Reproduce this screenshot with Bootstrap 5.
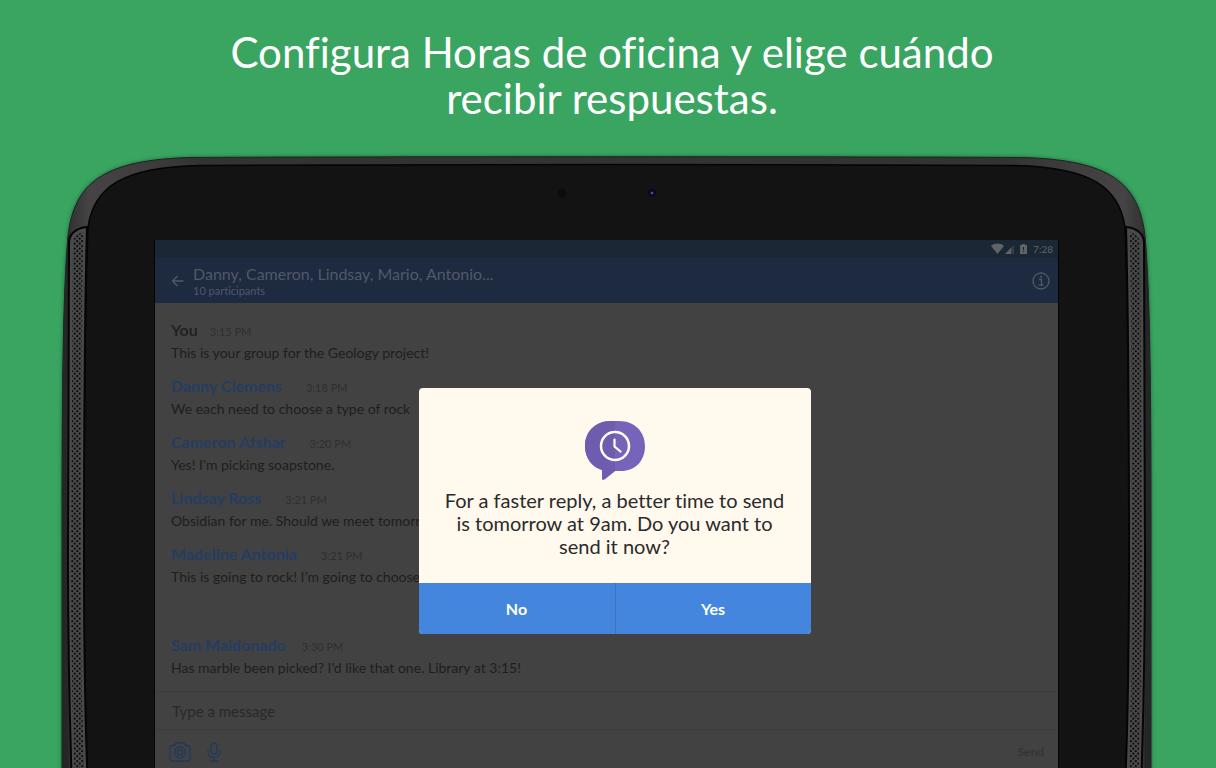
<!DOCTYPE html>
<html lang="es">
<head>
<meta charset="utf-8">
<meta name="viewport" content="width=device-width, initial-scale=1">
<title>Horas de oficina</title>
<link href="https://cdn.jsdelivr.net/npm/bootstrap@5.3.0/dist/css/bootstrap.min.css" rel="stylesheet">
<style>
  body { background: #39a561; font-family: Lato, "Open Sans", sans-serif; font-variant-ligatures: none; }
  .headline { color: #fff; font-size: 42px; line-height: 46px; font-weight: 400; padding: 29px 200px 35px 208px; }
  .tablet { margin: 0 65px 0 62px; padding: 84px 93px 0; }
  .shell { z-index: 0; }
  .screen { z-index: 1; background: #424242; color: #1e1e1e; }
  .status { background: #1a2735; color: #5f6468; height: 18px; font-size: 10px; padding-right: 5px; }
  .appbar { background: #1d2a40; color: #51586a; height: 45px; padding: 0 8px 0 16px; }
  .appbar h2 { font-size: 16px; line-height: 20px; font-weight: 400; }
  .appbar p { font-size: 11px; line-height: 14px; }
  .appbar .btn, .tools .btn { line-height: 0; color: inherit; }
  .thread { padding: 16px 16px 13px; font-size: 14px; line-height: 21px; }
  .msg { height: 56px; }
  .msg-late { margin-top: 35px; height: 44px; }
  .sender { color: #243d63; font-size: 16px; font-weight: 700; }
  .sender-me { color: #222; }
  .time { color: #2f2f2f; font-size: 11px; }
  .compose { height: 39px; border-top: 1px solid #3c3c3c; border-bottom: 1px solid #3c3c3c; padding: 2px 17px 0; }
  .compose input, .compose input:focus { background: transparent; color: #1b1b1b; font-size: 15px; box-shadow: none; }
  .compose input::placeholder { color: #292929; opacity: 1; }
  .tools { height: 44px; padding: 0 14px; color: #22385c; }
  .tools .send { color: #343434; font-size: 12px; font-weight: 700; line-height: 16px; }
  .overlay { z-index: 2; padding: 148px 0 0 16px; }
  .prompt { width: 392px; border-radius: 4px; background: #fff9ee; color: #2b2b2b; }
  .prompt-body { padding: 33px 16px 25px; }
  .prompt-body p { font-size: 20px; line-height: 23px; padding: 0 4px; }
  .answer { background: #4486dd; color: #fff; font-size: 16px; font-weight: 700; height: 51px; border-radius: 0; }
  .answer:hover { background: #3b78ca; color: #fff; }
  .answer + .answer { border-left: 1px solid #3b73bf; }
</style>
</head>
<body>
<div class="min-vh-100 d-flex flex-column overflow-hidden vh-100">
  <h1 class="headline text-center mb-0">Configura Horas de oficina y elige cuándo recibir respuestas.</h1>

  <main class="tablet position-relative flex-grow-1">
    <svg class="shell position-absolute top-0 start-0 w-100 overflow-visible" height="612" viewBox="62 156 1089 612" preserveAspectRatio="none" aria-hidden="true">
      <defs>
        <linearGradient id="rim" x1="0" y1="0" x2="1" y2="0">
          <stop offset="0" stop-color="#2b2c2c"/><stop offset=".025" stop-color="#454343"/><stop offset=".07" stop-color="#3f3d3d"/><stop offset=".13" stop-color="#343333"/>
          <stop offset=".87" stop-color="#343333"/><stop offset=".93" stop-color="#3f3d3d"/><stop offset=".975" stop-color="#454343"/><stop offset="1" stop-color="#2b2c2c"/>
        </linearGradient>
        <pattern id="mesh" width="5" height="5" patternUnits="userSpaceOnUse" x="71" y="230">
          <rect width="5" height="5" fill="#4a4949"/>
          <circle cx="1.2" cy="1.2" r="1.1" fill="#0b0b0b"/><circle cx="3.7" cy="3.7" r="1.1" fill="#0b0b0b"/>
        </pattern>
        <filter id="soft" x="-5%" y="-5%" width="110%" height="110%"><feGaussianBlur stdDeviation="2"/></filter>
        <path id="body-shape" d="M62 790V560C62 440 62 300 68 236C74 183 103 160 190 157.500C330 156.500 883 156.500 1023 157.500C1110 160 1139 183 1145 236C1151 300 1151 440 1151 560V790Z"/>
        <g id="side">
          <path d="M62 790V560C62 440 62 300 68 236L71 231C67 330 67 440 67 600L69 790Z" fill="#252627"/>
          <path d="M69 243C69 234 76 228 87 227C85 300 84 400 84 560C84 660 85 720 88 790H72C69 700 68 620 68 560Z" fill="#4a4949" stroke="#050505" stroke-width="2"/>
          <path d="M73 243C73 238 78 233 83 232C82 300 81 400 81 560C81 660 82 720 85 790H75C72 700 71 620 71 560Z" fill="url(#mesh)"/>
        </g>
      </defs>
      <use href="#body-shape" fill="#143d24" opacity=".7" filter="url(#soft)"/>
      <use href="#body-shape" fill="url(#rim)" stroke="#222" stroke-width="1"/>
      <path d="M88 790C84 700 84 620 84 560C84 400 85 300 88 227C94 186 124 167 200 165.500C340 164 873 164 1013 165.500C1089 167 1119 186 1125 227C1128 300 1129 400 1129 560C1129 620 1129 700 1125 790Z" fill="#131313" stroke="#040404" stroke-width="1.500"/>
      <use href="#side"/>
      <use href="#side" transform="translate(1213 0) scale(-1 1)"/>
      <circle cx="562" cy="193" r="4.500" fill="#0b0b0b"/>
      <circle cx="652" cy="193" r="4" fill="#0c0a1a"/><circle cx="652" cy="193" r="1.300" fill="#5548c8"/>
      <path d="M154.500 790V240M1058.500 790V240" stroke="#050505"/>
    </svg>

    <section class="screen position-relative">
      <div class="status d-flex justify-content-end align-items-center">
        <svg width="38" height="12" viewBox="0 0 38 12" fill="#5f6462" aria-hidden="true">
          <path d="M0 3C4-.2 9-.2 13 3L6.500 11Z"/>
          <path d="M14 11L23 2V11Z" fill="#343e4a"/><path d="M14 11L20 5V11Z"/>
          <path d="M29 2H31V1H34V2H36V11H29ZM32 4V7H33V4ZM32 8V9H33V8Z" fill-rule="evenodd"/>
        </svg>
        <span class="ms-1">7:28</span>
      </div>

      <header class="appbar d-flex align-items-center">
        <button class="btn p-0 border-0" type="button" aria-label="Back">
          <svg width="14" height="12" viewBox="0 0 14 12" fill="none" stroke="currentColor" stroke-width="1.400"><path d="M12.500 6H1.500M6.500 1L1.500 6L6.500 11"/></svg>
        </button>
        <div class="ms-2 flex-grow-1">
          <h2 class="mb-0">Danny, Cameron, Lindsay, Mario, Antonio...</h2>
          <p class="mb-0">10 participants</p>
        </div>
        <button class="btn p-0 border-0" type="button" aria-label="Info">
          <svg width="18" height="18" viewBox="0 0 18 18" fill="none" stroke="currentColor" stroke-width="1.300"><circle cx="9" cy="9" r="8"/><path d="M7 7.500H9.500V13M6.800 13.200H11.500"/><circle cx="9.200" cy="4.800" r="1" fill="currentColor" stroke="none"/></svg>
        </button>
      </header>

      <div class="thread">
        <article class="msg"><div><span class="sender sender-me me-2 pe-1">You</span><span class="time">3:15 PM</span></div>This is your group for the Geology project!</article>
        <article class="msg"><div><span class="sender me-4">Danny Clemens</span><span class="time">3:18 PM</span></div>We each need to choose a type of rock</article>
        <article class="msg"><div><span class="sender me-4">Cameron Afshar</span><span class="time">3:20 PM</span></div>Yes! I’m picking soapstone.</article>
        <article class="msg"><div><span class="sender me-4">Lindsay Ross</span><span class="time">3:21 PM</span></div>Obsidian for me. Should we meet tomorrow?</article>
        <article class="msg"><div><span class="sender me-4">Madeline Antonia</span><span class="time">3:21 PM</span></div>This is going to rock! I’m going to choose</article>
        <article class="msg msg-late"><div><span class="sender me-3">Sam Maldonado</span><span class="time">3:30 PM</span></div>Has marble been picked? I’d like that one. Library at 3:15!</article>
      </div>

      <div class="compose d-flex align-items-center">
        <input class="form-control border-0 p-0" type="text" placeholder="Type a message" aria-label="Type a message">
      </div>
      <div class="tools d-flex align-items-center">
        <button class="btn p-0 border-0" type="button" aria-label="Camera">
          <svg width="22" height="20" viewBox="0 0 22 20" fill="none" stroke="currentColor" stroke-width="1.300"><path d="M3 3.500H5.500L7 1H15L16.500 3.500H19Q21 3.500 21 5.500V17Q21 19 19 19H3Q1 19 1 17V5.500Q1 3.500 3 3.500Z"/><circle cx="11" cy="10.500" r="5.500"/><circle cx="11" cy="10.500" r="2.700"/></svg>
        </button>
        <button class="btn p-0 border-0 ms-3" type="button" aria-label="Record">
          <svg width="14" height="20" viewBox="0 0 14 20" fill="none" stroke="currentColor" stroke-width="1.300"><rect x="4" y="1" width="6" height="11" rx="3"/><path d="M1 8V10C1 17 13 17 13 10V8M7 15V19M2.500 19H11.500"/></svg>
        </button>
        <button class="btn p-0 border-0 ms-auto send" type="button">Send</button>
      </div>

      <div class="overlay position-absolute top-0 start-0 w-100 d-flex justify-content-center">
        <div class="prompt overflow-hidden" role="dialog" aria-label="Office hours">
          <div class="prompt-body text-center">
            <svg class="d-block mx-auto mb-2" width="60" height="60" viewBox="0 0 60 60" aria-hidden="true">
              <path d="M26 0H34C50 0 60 11 60 25C60 40 50 50 36 50H30L20 58Q17 60 17 57V49C7 46 0 37 0 25C0 11 10 0 26 0Z" fill="#7863bb"/>
              <path d="M30 0H26C10 0 0 11 0 25C0 37 7 46 17 49V57Q17 60 20 58L30 50Z" fill="#6f5cae"/>
              <circle cx="30" cy="25" r="14" fill="none" stroke="#fff" stroke-width="2.500"/>
              <path d="M29.500 18.500V25.500L35.500 30.500" fill="none" stroke="#fff" stroke-width="2.200" stroke-linecap="round"/>
            </svg>
            <p class="mb-0">For a faster reply, a better time to send is tomorrow at 9am. Do you want to send it now?</p>
          </div>
          <div class="d-flex">
            <button class="btn answer border-0 w-50" type="button">No</button>
            <button class="btn answer border-top-0 border-end-0 border-bottom-0 w-50" type="button">Yes</button>
          </div>
        </div>
      </div>
    </section>
  </main>
</div>
<script src="https://cdn.jsdelivr.net/npm/bootstrap@5.3.0/dist/js/bootstrap.bundle.min.js"></script>
</body>
</html>
